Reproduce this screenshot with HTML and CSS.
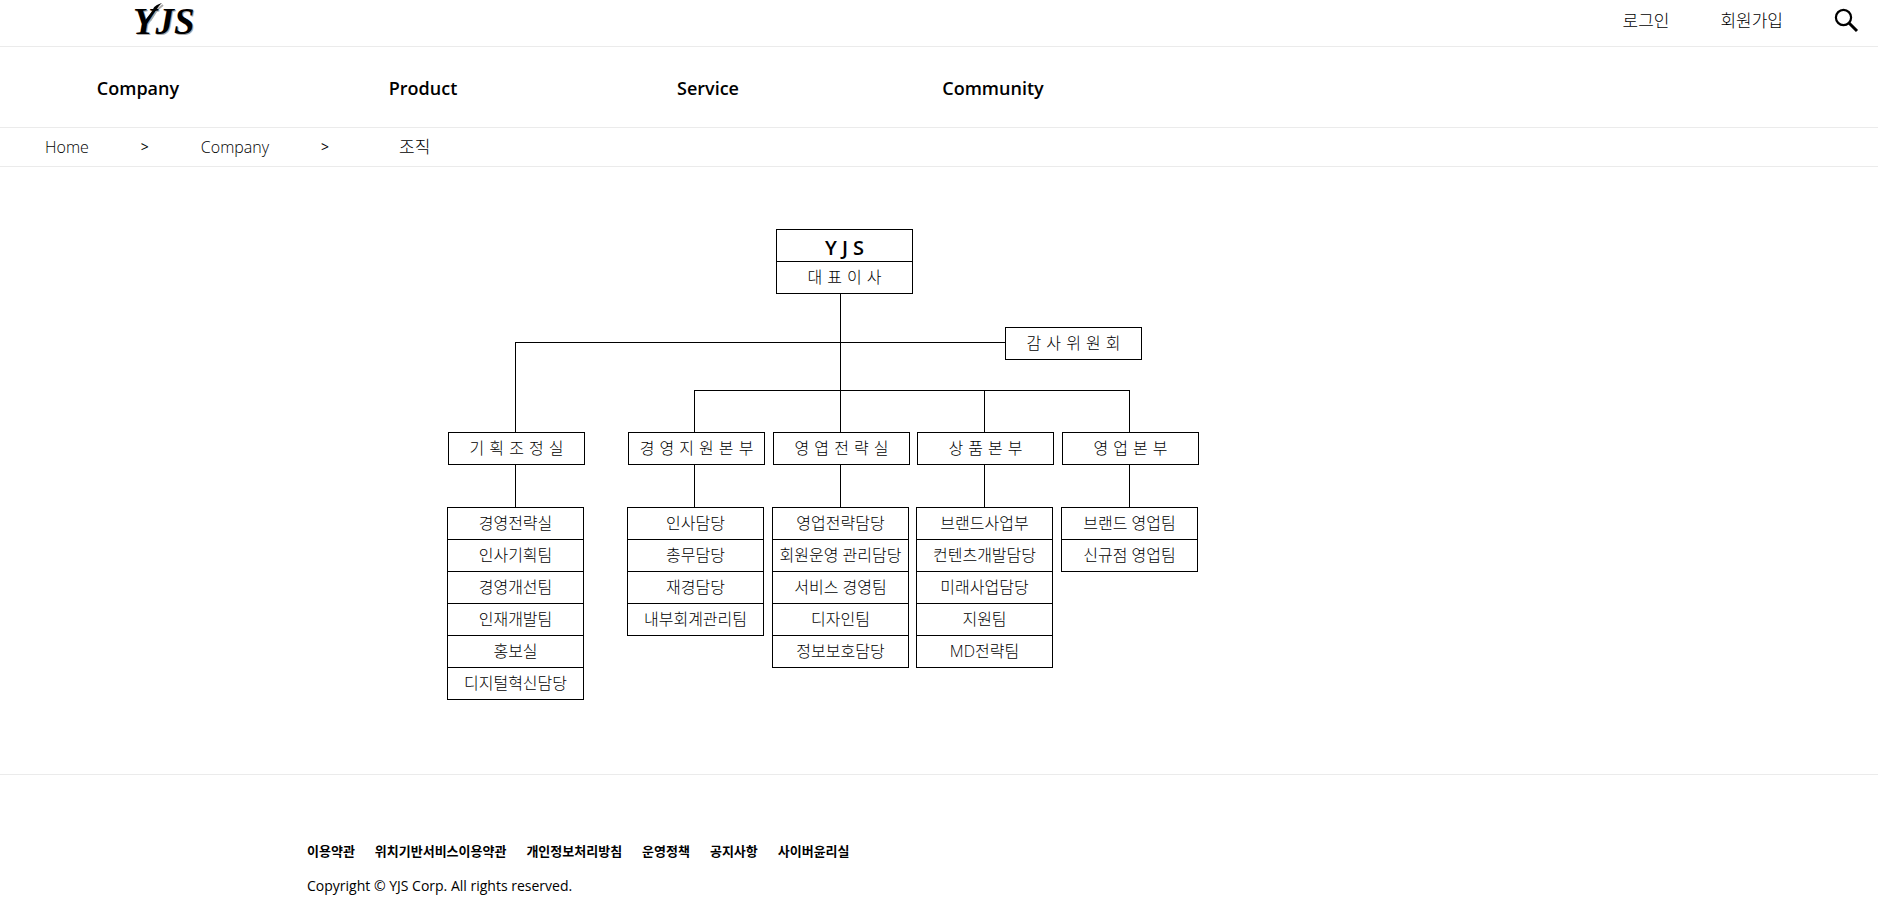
FILE: index.html
```html
<!DOCTYPE html>
<html lang="ko">
<head>
<meta charset="utf-8">
<title>YJS - 조직</title>
<link rel="stylesheet" href="styles.css">
</head>
<body>
<header class="top">
  <a class="logo" href="#" aria-label="YJS">
    <svg width="80" height="46" viewBox="0 0 80 46">
      <text class="logo-shadow" x="4" y="35">YJS</text>
      <path class="logo-swash-shadow" d="M20 21 L27 10 L33 5"/>
      <text class="logo-text" x="3" y="34">YJS</text>
      <path d="M13 23 L23 10 C23 7 26 5 32 3 C29 5 28 8 26 10 L16 23 Z"/>
    </svg>
  </a>
  <div class="account">
    <a href="#">로그인</a>
    <a href="#">회원가입</a>
    <button class="search" type="button" aria-label="검색">
      <svg width="26" height="26" viewBox="0 0 26 26" fill="none" stroke="#000">
        <circle cx="9.500" cy="9.500" r="7.600" stroke-width="2.200"/>
        <path d="M14.500 14.500 L23 23" stroke-width="3"/>
      </svg>
    </button>
  </div>
</header>
<nav class="menu">
  <a href="#">Company</a>
  <a href="#">Product</a>
  <a href="#">Service</a>
  <a href="#">Community</a>
</nav>
<nav class="crumbs">
  <a href="#">Home</a>
  <span class="sep">&gt;</span>
  <a href="#">Company</a>
  <span class="sep">&gt;</span>
  <a class="current" href="#">조직</a>
</nav>
<main class="content">
  <div class="chart">
    <svg class="lines" width="695" height="471" fill="none" stroke="#000" shape-rendering="crispEdges">
      <path d="M393.500 65V278M68.500 203V113.500H558M68.500 236V278M247.500 203V161.500H682.500V203M247.500 236V278M537.500 161V278M682.500 236V278"/>
    </svg>
    <ul class="node spaced ceo"><li class="title">Y J S</li><li>대 표 이 사</li></ul>
    <ul class="node spaced audit"><li>감 사 위 원 회</li></ul>

    <ul class="node spaced dept planning"><li>기 획 조 정 실</li></ul>
    <ul class="node spaced dept support"><li>경 영 지 원 본 부</li></ul>
    <ul class="node spaced dept strategy"><li>영 엽 전 략 실</li></ul>
    <ul class="node spaced dept product"><li>상 품 본 부</li></ul>
    <ul class="node spaced dept sales"><li>영 업 본 부</li></ul>

    <ul class="node team planning-team"><li>경영전략실</li><li>인사기획팀</li><li>경영개선팀</li><li>인재개발팀</li><li>홍보실</li><li>디지털혁신담당</li></ul>
    <ul class="node team support-team"><li>인사담당</li><li>총무담당</li><li>재경담당</li><li>내부회계관리팀</li></ul>
    <ul class="node team strategy-team"><li>영업전략담당</li><li>회원운영 관리담당</li><li>서비스 경영팀</li><li>디자인팀</li><li>정보보호담당</li></ul>
    <ul class="node team product-team"><li>브랜드사업부</li><li>컨텐츠개발담당</li><li>미래사업담당</li><li>지원팀</li><li>MD전략팀</li></ul>
    <ul class="node team sales-team"><li>브랜드 영업팀</li><li>신규점 영업팀</li></ul>
  </div>
</main>
<footer class="footer">
  <div class="policies">
    <a href="#">이용약관</a>
    <a href="#">위치기반서비스이용약관</a>
    <a href="#">개인정보처리방침</a>
    <a href="#">운영정책</a>
    <a href="#">공지사항</a>
    <a href="#">사이버윤리실</a>
  </div>
  <p class="copyright">Copyright © YJS Corp. All rights reserved.</p>
</footer>
</body>
</html>
```
FILE: styles.css
```css
* { box-sizing: border-box; }
body {
  margin: 0;
  background: #fff;
  color: #000;
  font-family: "Open Sans", "Noto Sans CJK KR", sans-serif;
  font-size: 16px;
  font-weight: 300;
  line-height: 24px;
}
a { color: inherit; text-decoration: none; }
ul { margin: 0; padding: 0; list-style: none; }

.top {
  display: flex;
  justify-content: space-between;
  height: 47px;
  padding: 0 18px 0 130px;
  border-bottom: 1px solid #ebebeb;
}
.logo svg { display: block; }
.logo text {
  font-family: "Liberation Serif", serif;
  font-size: 37px;
  font-style: italic;
  font-weight: 700;
}
.logo .logo-shadow { fill: #aaa; }
.logo-swash-shadow { fill: none; stroke: #aaa; stroke-width: 2; }
.account {
  display: flex;
  align-items: center;
  gap: 51px;
  padding-bottom: 5px;
  font-size: 17px;
}
.search {
  display: flex;
  padding: 0;
  border: 0;
  background: none;
  cursor: pointer;
}

.menu {
  display: grid;
  grid-template-columns: repeat(4, 240px);
  gap: 45px;
  align-items: center;
  height: 81px;
  padding: 2px 0 0 18px;
  border-bottom: 1px solid #ebebeb;
  font-size: 18px;
  font-weight: 600;
  text-align: center;
}

.crumbs {
  display: flex;
  align-items: center;
  gap: 52px;
  height: 39px;
  padding-left: 45px;
  border-bottom: 1px solid #ebebeb;
}
.sep { font-size: 14px; font-weight: 400; }
.current { margin-left: 18px; font-size: 17px; }

.content { padding: 62px 0 74px 447px; }
.chart {
  position: relative;
  width: 695px;
  height: 471px;
}
.lines { display: block; }
.node {
  position: absolute;
  width: 137px;
  border: 1px solid #000;
  background: #fff;
  text-align: center;
  white-space: nowrap;
}
.spaced { font-family: "DejaVu Sans", "Noto Sans CJK KR", sans-serif; }
.node li { height: 31px; line-height: 31px; }
.node li + li { height: 32px; border-top: 1px solid #000; }
.node .title {
  padding-top: 2px;
  font-family: "Open Sans", sans-serif;
  font-size: 20px;
  font-weight: 600;
}
.ceo { left: 329px; top: 0; }
.audit { left: 558px; top: 98px; }
.dept { top: 203px; }
.planning { left: 1px; }
.support { left: 181px; }
.strategy { left: 326px; }
.product { left: 470px; }
.sales { left: 615px; }
.team { top: 278px; }
.planning-team { left: 0; }
.support-team { left: 180px; }
.strategy-team { left: 325px; }
.product-team { left: 469px; }
.sales-team { left: 614px; }

.footer {
  padding: 64px 0 23px 307px;
  border-top: 1px solid #ebebeb;
}
.policies {
  display: flex;
  gap: 20px;
  font-size: 13px;
  font-weight: 600;
}
.copyright { margin: 11px 0 0; font-size: 14px; font-weight: 400; }
```
